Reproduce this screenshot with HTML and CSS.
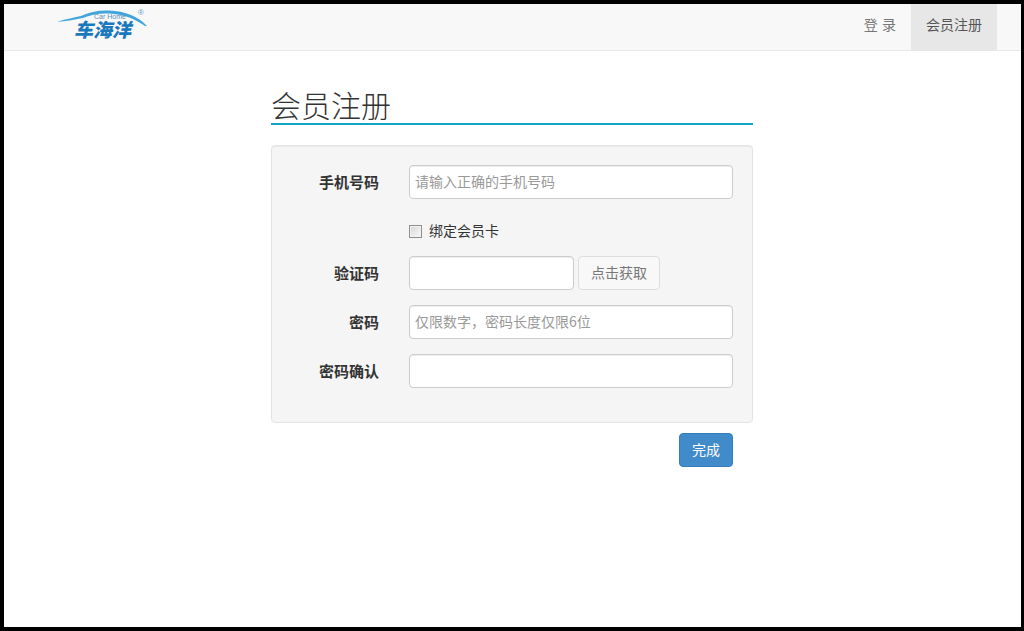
FILE: index.html
```html
<!DOCTYPE html>
<html lang="zh">
<head>
<meta charset="utf-8">
<title>会员注册</title>
<link rel="stylesheet" href="styles.css">
</head>
<body>
<div class="frame">
  <header class="navbar">
    <a class="logo" href="#">
      <svg class="logo-arc" width="94" height="28" viewBox="0 0 94 28">
        <path d="M0 12 C8 9 16 8 24 6 C32 2 42 0 52 0.5 C68 1 82 7 90 16 L88 16 C78 9 66 4 52 3.5 C42 3 33 5 26 8 C17 10 8 11 0 12 Z" fill="#3fa5dc"/>
      </svg>
      <span class="logo-reg">®</span>
      <span class="logo-sub">Car Home</span>
      <span class="logo-name">车海洋</span>
    </a>
    <nav class="nav">
      <a class="nav-link login" href="#">登 录</a>
      <a class="nav-link active" href="#">会员注册</a>
    </nav>
  </header>
  <main class="content">
    <h1 class="title">会员注册</h1>
    <form class="well">
      <div class="row">
        <label class="label">手机号码</label>
        <input class="input wide" placeholder="请输入正确的手机号码">
      </div>
      <div class="row check-row">
        <label class="check"><input type="checkbox" class="checkbox"><span class="check-text">绑定会员卡</span></label>
      </div>
      <div class="row">
        <label class="label">验证码</label>
        <input class="input short">
        <button type="button" class="btn">点击获取</button>
      </div>
      <div class="row">
        <label class="label">密码</label>
        <input class="input wide" placeholder="仅限数字，密码长度仅限6位">
      </div>
      <div class="row">
        <label class="label">密码确认</label>
        <input class="input wide">
      </div>
    </form>
    <div class="actions"><button type="button" class="btn-primary">完成</button></div>
  </main>
</div>
</body>
</html>
```
FILE: styles.css
```css
* { box-sizing: border-box; }
html, body { margin: 0; height: 100%; }
body {
  font-family: "Noto Sans CJK SC", "Liberation Sans", sans-serif;
  font-size: 14px;
  color: #333;
  background: #fff;
}
.frame {
  height: 631px;
  border-style: solid;
  border-color: #000;
  border-width: 4px 3px 4px 4px;
  overflow: hidden;
}
.navbar {
  height: 47px;
  background: #f8f8f8;
  border-bottom: 1px solid #e7e7e7;
  display: flex;
  justify-content: space-between;
}
.logo {
  position: relative;
  display: block;
  width: 94px;
  height: 46px;
  margin-left: 53px;
  text-decoration: none;
}
.logo-arc { position: absolute; left: 0; top: 6px; }
.logo-reg {
  position: absolute;
  left: 81px;
  top: 5px;
  font: 8px/8px "Liberation Sans", sans-serif;
  color: #5b9bc9;
}
.logo-sub {
  position: absolute;
  left: 37px;
  top: 10px;
  font: 7px/6px "Liberation Sans", sans-serif;
  color: #5b8fb5;
  white-space: nowrap;
}
.logo-name {
  position: absolute;
  left: 17px;
  top: 16px;
  font-size: 19px;
  line-height: 18px;
  font-weight: 900;
  font-style: italic;
  color: #1a78bd;
  white-space: nowrap;
}
.nav { display: flex; margin-right: 24px; }
.nav-link {
  display: block;
  padding: 0 15px;
  line-height: 41px;
  color: #777;
  text-decoration: none;
}
.login { word-spacing: 1px; }
.nav-link.active { background: #e7e7e7; color: #555; }
.content { width: 482px; margin-left: 267px; }
.title {
  margin: 34px 0 20px;
  height: 40px;
  font-size: 30px;
  line-height: 38px;
  font-weight: 300;
  color: #333;
  border-bottom: 2px solid #0ea5c6;
  white-space: nowrap;
}
.well {
  height: 278px;
  padding: 19px 19px 0 0;
  background: #f5f5f5;
  border: 1px solid #e3e3e3;
  border-radius: 4px;
  box-shadow: inset 0 1px 1px rgba(0,0,0,.05);
}
.row { display: flex; align-items: center; height: 34px; margin-bottom: 15px; }
.check-row { margin-bottom: 8px; padding-left: 137px; }
.label {
  width: 107px;
  margin-right: 30px;
  padding-bottom: 2px;
  text-align: right;
  font-size: 15px;
  font-weight: 700;
  color: #333;
}
.input {
  height: 34px;
  padding: 5px 5px 7px;
  font: 14px "Noto Sans CJK SC", sans-serif;
  color: #555;
  background: #fff;
  border: 1px solid #ccc;
  border-radius: 4px;
  box-shadow: inset 0 1px 1px rgba(0,0,0,.075);
}
.input::placeholder { color: #999; opacity: 1; }
.wide { width: 324px; }
.short { width: 165px; }
.check { display: flex; align-items: center; color: #333; }
.check-text { padding-bottom: 2px; }
.checkbox {
  appearance: none;
  width: 13px;
  height: 13px;
  margin: 0 7px 0 0;
  border: 1px solid #8e8e8e;
  background: linear-gradient(135deg, #d6d6da, #fafafa);
  box-shadow: inset 0 0 0 1px #f2f2f2;
}
.btn {
  width: 82px;
  height: 34px;
  margin-left: 4px;
  padding: 0 0 2px;
  font: 14px "Noto Sans CJK SC", sans-serif;
  color: #777;
  background: #f8f8f8;
  border: 1px solid #ddd;
  border-radius: 4px;
}
.actions { display: flex; justify-content: flex-end; padding: 10px 20px 0 0; }
.btn-primary {
  width: 54px;
  height: 34px;
  padding: 0 0 2px;
  font: 14px "Noto Sans CJK SC", sans-serif;
  color: #fff;
  background: #428bca;
  border: 1px solid #357ebd;
  border-radius: 4px;
}
```
